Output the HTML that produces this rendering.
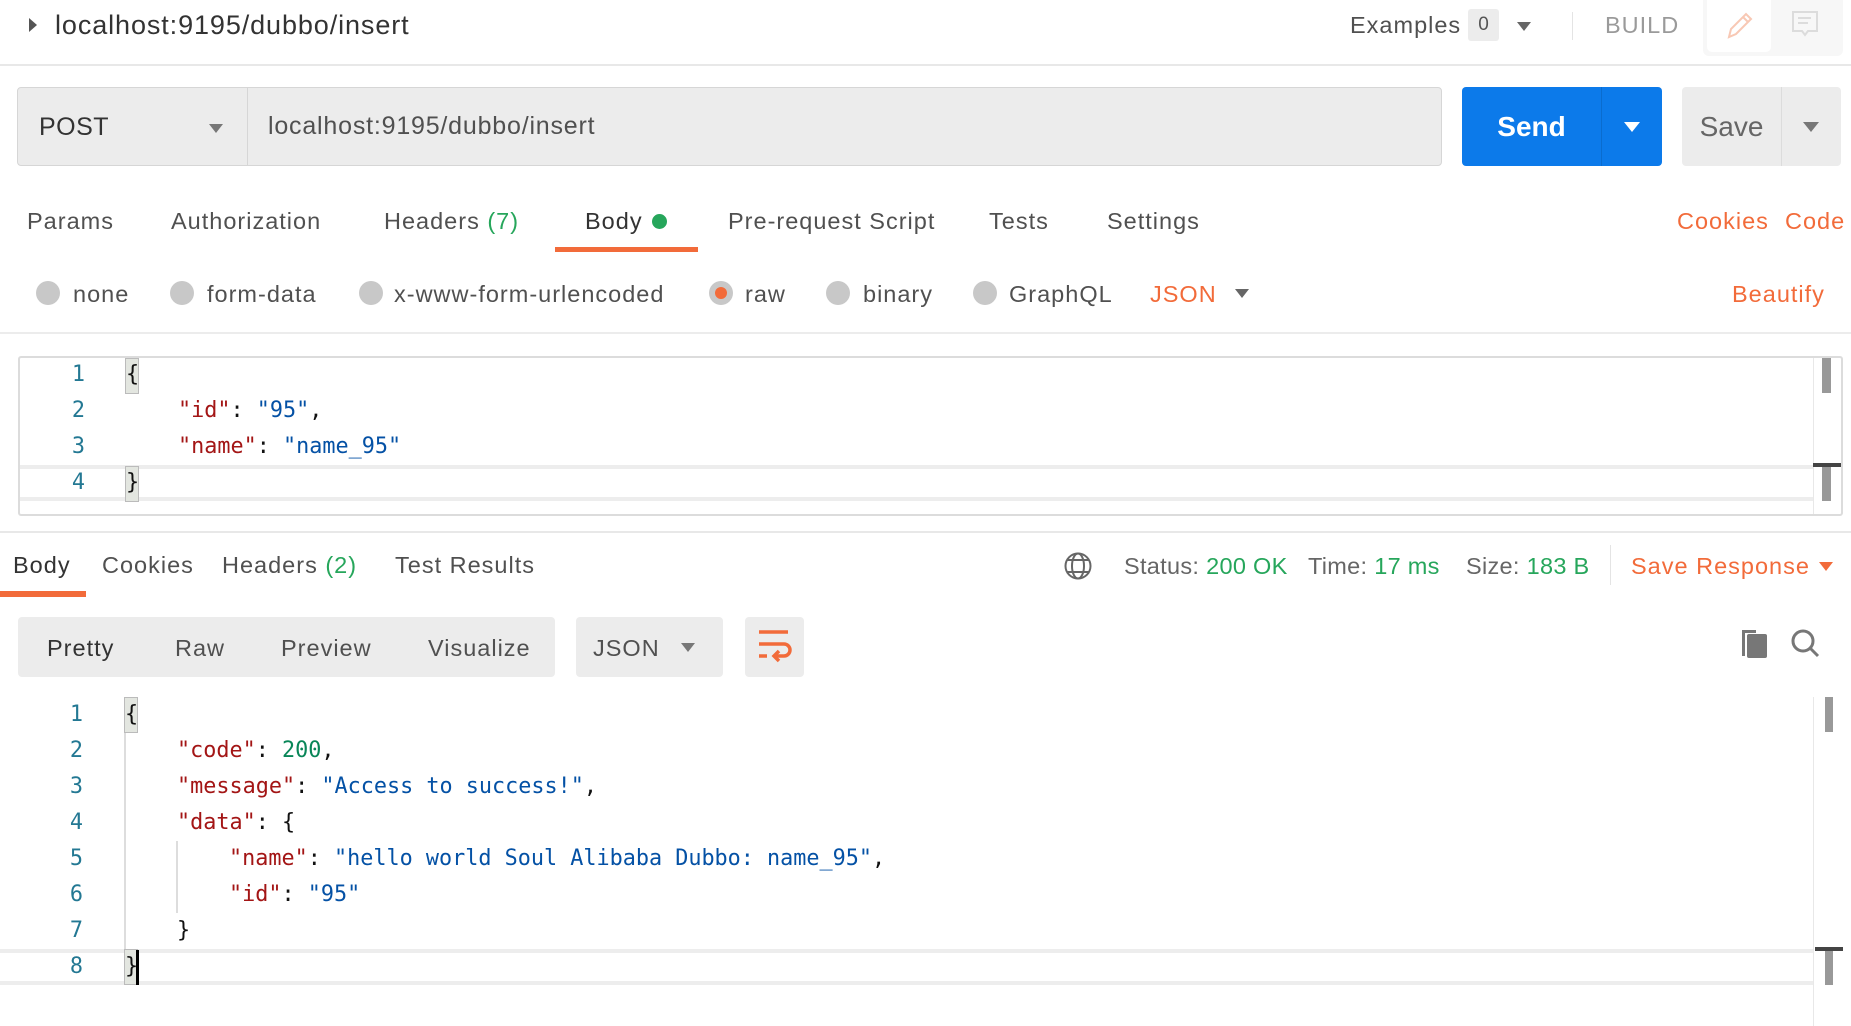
<!DOCTYPE html>
<html><head><meta charset="utf-8"><style>
*{margin:0;padding:0;box-sizing:border-box}
body{width:1851px;height:1026px;background:#fff;position:relative;overflow:hidden;font-family:"Liberation Sans",sans-serif;color:#505050}
.a{position:absolute;white-space:nowrap}
.t{font-size:23.5px;line-height:30px;letter-spacing:1px}
.or{color:#f26b3a}.gr{color:#26a65b}
.radio{position:absolute;width:24px;height:24px;border-radius:50%;background:#c8c8c8}
.tri{position:absolute;width:0;height:0;border-left:7px solid transparent;border-right:7px solid transparent;border-top:9px solid #666}
.mono{font-family:"DejaVu Sans Mono","Liberation Mono",monospace;font-size:21.8px;line-height:30px}
.ln{position:absolute;width:40px;text-align:right;color:#237893}
.k{color:#a31515}.s{color:#0451a5}.n{color:#098658}.p{color:#111}
</style></head><body>
<!-- header -->
<div class="a" style="left:29px;top:18px;width:0;height:0;border-top:7px solid transparent;border-bottom:7px solid transparent;border-left:8px solid #555"></div>
<div class="a" style="left:55px;top:9px;font-size:27px;letter-spacing:0.9px;line-height:32px;color:#333">localhost:9195/dubbo/insert</div>
<div class="a t" style="left:1350px;top:10px;color:#505050">Examples</div>
<div class="a" style="left:1468px;top:9px;width:31px;height:32px;background:#ececec;border-radius:3px;font-size:19px;line-height:32px;text-align:center;color:#555">0</div>
<div class="tri" style="left:1517px;top:22px"></div>
<div class="a" style="left:1572px;top:12px;width:1px;height:28px;background:#e4e4e4"></div>
<div class="a t" style="left:1605px;top:10px;color:#9a9a9a">BUILD</div>
<div class="a" style="left:1703px;top:0;width:140px;height:56px;background:#f7f7f7;border-radius:0 0 6px 6px"></div>
<div class="a" style="left:1707px;top:0;width:64px;height:52px;background:#fff;border-radius:0 0 5px 5px"></div>
<svg class="a" style="left:1725px;top:10px" width="30" height="30" viewBox="0 0 30 30"><path d="M4 27 L6 19 L21 4 L26 9 L11 24 Z M18 7 L23 12" fill="none" stroke="#f8c8b4" stroke-width="2"/></svg>
<svg class="a" style="left:1790px;top:10px" width="30" height="30" viewBox="0 0 30 30"><path d="M3 2 H27 V21 H18 L15 25 L12 21 H3 Z M8 8 H21 M8 13 H18" fill="none" stroke="#dcdcdc" stroke-width="2"/></svg>
<div class="a" style="left:0;top:64px;width:1851px;height:2px;background:#e8e8e8"></div>
<!-- url bar -->
<div class="a" style="left:17px;top:87px;width:1425px;height:79px;background:#ececec;border:1px solid #d6d6d6;border-radius:4px"></div>
<div class="a" style="left:247px;top:88px;width:1px;height:77px;background:#d6d6d6"></div>
<div class="a" style="left:39px;top:112px;font-size:25px;letter-spacing:0.5px;line-height:30px;color:#333">POST</div>
<div class="tri" style="left:209px;top:124px;border-top-color:#777"></div>
<div class="a" style="left:268px;top:111px;font-size:25px;letter-spacing:0.8px;line-height:30px;color:#505050">localhost:9195/dubbo/insert</div>
<div class="a" style="left:1462px;top:87px;width:200px;height:79px;background:#0c7aea;border-radius:4px"></div>
<div class="a" style="left:1601px;top:87px;width:1px;height:79px;background:#0a6ccf"></div>
<div class="a" style="left:1462px;top:110px;width:139px;text-align:center;font-size:28px;line-height:34px;font-weight:bold;color:#fff">Send</div>
<div class="tri" style="left:1624px;top:122px;border-top-color:#fff;border-width:10px 8px 0 8px"></div>
<div class="a" style="left:1682px;top:87px;width:159px;height:79px;background:#ececec;border-radius:4px"></div>
<div class="a" style="left:1781px;top:87px;width:1px;height:79px;background:#dcdcdc"></div>
<div class="a" style="left:1682px;top:110px;width:99px;text-align:center;font-size:28px;line-height:34px;color:#666">Save</div>
<div class="tri" style="left:1803px;top:122px;border-top-color:#777;border-width:10px 8px 0 8px"></div>
<!-- tabs -->
<div class="a t" style="left:27px;top:206px">Params</div>
<div class="a t" style="left:171px;top:206px">Authorization</div>
<div class="a t" style="left:384px;top:206px">Headers <span class="gr">(7)</span></div>
<div class="a t" style="left:585px;top:206px;color:#333">Body</div>
<div class="a" style="left:652px;top:214px;width:15px;height:15px;border-radius:50%;background:#26a65b"></div>
<div class="a t" style="left:728px;top:206px">Pre-request Script</div>
<div class="a t" style="left:989px;top:206px">Tests</div>
<div class="a t" style="left:1107px;top:206px">Settings</div>
<div class="a t or" style="left:1677px;top:206px">Cookies</div>
<div class="a t or" style="left:1785px;top:206px">Code</div>
<div class="a" style="left:555px;top:247px;width:143px;height:5px;background:#f26b3a"></div>
<!-- radio row -->
<div class="radio" style="left:36px;top:281px"></div><div class="a t" style="left:73px;top:279px">none</div>
<div class="radio" style="left:170px;top:281px"></div><div class="a t" style="left:207px;top:279px">form-data</div>
<div class="radio" style="left:359px;top:281px"></div><div class="a t" style="left:394px;top:279px">x-www-form-urlencoded</div>
<div class="radio" style="left:709px;top:281px"></div><div class="a" style="left:715px;top:287px;width:12px;height:12px;border-radius:50%;background:#f26b3a"></div><div class="a t" style="left:745px;top:279px">raw</div>
<div class="radio" style="left:826px;top:281px"></div><div class="a t" style="left:863px;top:279px">binary</div>
<div class="radio" style="left:973px;top:281px"></div><div class="a t" style="left:1009px;top:279px">GraphQL</div>
<div class="a t or" style="left:1150px;top:279px">JSON</div>
<div class="tri" style="left:1235px;top:289px"></div>
<div class="a t or" style="left:1732px;top:279px">Beautify</div>
<div class="a" style="left:0;top:332px;width:1851px;height:2px;background:#ececec"></div>
<!-- request editor -->
<div class="a" style="left:18px;top:356px;width:1825px;height:160px;border:2px solid #dcdcdc;border-radius:3px"></div>
<div class="a" style="left:20px;top:465px;width:1793px;height:4px;background:#ededed"></div>
<div class="a" style="left:20px;top:497px;width:1793px;height:4px;background:#ededed"></div>
<div class="a" style="left:1813px;top:358px;width:1px;height:156px;background:#e8e8e8"></div>
<div class="a" style="left:1822px;top:358px;width:9px;height:35px;background:#999"></div>
<div class="a" style="left:1813px;top:463px;width:28px;height:4px;background:#444"></div>
<div class="a" style="left:1822px;top:467px;width:9px;height:34px;background:#999"></div>
<div class="a" style="left:125px;top:358px;width:14px;height:36px;background:#e3e6e0;border:1px solid #bbb"></div>
<div class="a" style="left:125px;top:466px;width:14px;height:36px;background:#e3e6e0;border:1px solid #bbb"></div>
<div class="a mono" style="left:0;top:360px">
<div class="ln" style="left:45px;top:0">1</div><div class="a p" style="left:126px;top:0">{</div>
<div class="ln" style="left:45px;top:36px">2</div><div class="a" style="left:178px;top:36px"><span class="k">"id"</span><span class="p">: </span><span class="s">"95"</span><span class="p">,</span></div>
<div class="ln" style="left:45px;top:72px">3</div><div class="a" style="left:178px;top:72px"><span class="k">"name"</span><span class="p">: </span><span class="s">"name_95"</span></div>
<div class="ln" style="left:45px;top:108px">4</div><div class="a p" style="left:126px;top:108px">}</div>
</div>
<div class="a" style="left:0;top:531px;width:1851px;height:2px;background:#e8e8e8"></div>
<!-- response tabs -->
<div class="a t" style="left:13px;top:550px;color:#333">Body</div>
<div class="a t" style="left:102px;top:550px">Cookies</div>
<div class="a t" style="left:222px;top:550px">Headers <span class="gr">(2)</span></div>
<div class="a t" style="left:395px;top:550px">Test Results</div>
<div class="a" style="left:0;top:591px;width:86px;height:6px;background:#f26b3a"></div>
<svg class="a" style="left:1063px;top:551px" width="30" height="30" viewBox="0 0 30 30"><g fill="none" stroke="#666" stroke-width="2"><circle cx="15" cy="15" r="12.5"/><ellipse cx="15" cy="15" rx="6" ry="12.5"/><path d="M4 9 H26 M4 21 H26"/></g></svg>
<div class="a t" style="left:1124px;top:551px;color:#666;letter-spacing:0.3px">Status: <span class="gr">200 OK</span></div>
<div class="a t" style="left:1308px;top:551px;color:#666;letter-spacing:0.3px">Time: <span class="gr">17 ms</span></div>
<div class="a t" style="left:1466px;top:551px;color:#666;letter-spacing:0.3px">Size: <span class="gr">183 B</span></div>
<div class="a" style="left:1610px;top:545px;width:1px;height:40px;background:#e4e4e4"></div>
<div class="a t or" style="left:1631px;top:551px">Save Response</div>
<div class="tri" style="left:1819px;top:562px;border-top-color:#f26b3a"></div>
<!-- toolbar -->
<div class="a" style="left:18px;top:617px;width:537px;height:60px;background:#ececec;border-radius:4px"></div>
<div class="a t" style="left:47px;top:633px;color:#333">Pretty</div>
<div class="a t" style="left:175px;top:633px">Raw</div>
<div class="a t" style="left:281px;top:633px">Preview</div>
<div class="a t" style="left:428px;top:633px">Visualize</div>
<div class="a" style="left:576px;top:617px;width:147px;height:60px;background:#ececec;border-radius:4px"></div>
<div class="a t" style="left:593px;top:633px">JSON</div>
<div class="tri" style="left:681px;top:643px;border-top-color:#777"></div>
<div class="a" style="left:745px;top:617px;width:59px;height:60px;background:#ececec;border-radius:4px"></div>
<svg class="a" style="left:757px;top:629px" width="36" height="36" viewBox="0 0 36 36"><g fill="none" stroke="#f26b3a" stroke-width="3.5"><path d="M2 3 H31"/><path d="M2 15 H27 a6 6 0 0 1 0 12 H18"/><path d="M2 27 H10"/><path d="M22 22 L17 27 L22 32"/></g></svg>
<svg class="a" style="left:1740px;top:628px" width="32" height="32" viewBox="0 0 32 32"><path d="M2 2 H16 V5 H5 V28 H2 Z" fill="#777"/><rect x="7" y="6" width="20" height="24" rx="2" fill="#777"/></svg>
<svg class="a" style="left:1790px;top:628px" width="32" height="32" viewBox="0 0 32 32"><g fill="none" stroke="#777" stroke-width="3"><circle cx="13" cy="13" r="10"/><path d="M20 20 L28 28"/></g></svg>
<!-- response editor -->
<div class="a" style="left:0;top:949px;width:1813px;height:4px;background:#ededed"></div>
<div class="a" style="left:0;top:981px;width:1813px;height:4px;background:#ededed"></div>
<div class="a" style="left:1813px;top:697px;width:1px;height:329px;background:#e8e8e8"></div>
<div class="a" style="left:1825px;top:697px;width:8px;height:35px;background:#999"></div>
<div class="a" style="left:1815px;top:947px;width:28px;height:4px;background:#444"></div>
<div class="a" style="left:1825px;top:951px;width:8px;height:34px;background:#999"></div>
<div class="a" style="left:124px;top:697px;width:2px;height:288px;background:#ddd"></div>
<div class="a" style="left:176px;top:841px;width:2px;height:72px;background:#ddd"></div>
<div class="a" style="left:124px;top:697px;width:14px;height:36px;background:#e3e6e0;border:1px solid #bbb"></div>
<div class="a" style="left:124px;top:949px;width:14px;height:36px;background:#e3e6e0;border:1px solid #bbb"></div>
<div class="a" style="left:136px;top:950px;width:3px;height:35px;background:#000"></div>
<div class="a mono" style="left:0;top:700px">
<div class="ln" style="left:43px;top:0">1</div><div class="a p" style="left:125px;top:0">{</div>
<div class="ln" style="left:43px;top:36px">2</div><div class="a" style="left:177px;top:36px"><span class="k">"code"</span><span class="p">: </span><span class="n">200</span><span class="p">,</span></div>
<div class="ln" style="left:43px;top:72px">3</div><div class="a" style="left:177px;top:72px"><span class="k">"message"</span><span class="p">: </span><span class="s">"Access to success!"</span><span class="p">,</span></div>
<div class="ln" style="left:43px;top:108px">4</div><div class="a" style="left:177px;top:108px"><span class="k">"data"</span><span class="p">: {</span></div>
<div class="ln" style="left:43px;top:144px">5</div><div class="a" style="left:229px;top:144px"><span class="k">"name"</span><span class="p">: </span><span class="s">"hello world Soul Alibaba Dubbo: name_95"</span><span class="p">,</span></div>
<div class="ln" style="left:43px;top:180px">6</div><div class="a" style="left:229px;top:180px"><span class="k">"id"</span><span class="p">: </span><span class="s">"95"</span></div>
<div class="ln" style="left:43px;top:216px">7</div><div class="a p" style="left:177px;top:216px">}</div>
<div class="ln" style="left:43px;top:252px">8</div><div class="a p" style="left:125px;top:252px">}</div>
</div>
</body></html>
